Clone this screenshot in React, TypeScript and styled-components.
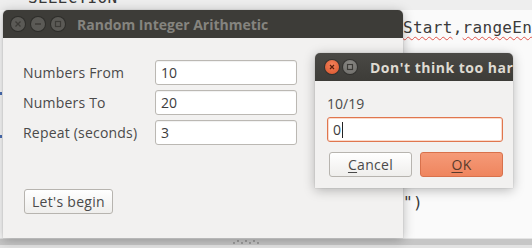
import React from "react";
import styled, { createGlobalStyle } from "styled-components";

const Global = createGlobalStyle`
  html, body { margin: 0; padding: 0; }
  body { width: 532px; height: 248px; overflow: hidden; background: #f6f6f6; }
  * { box-sizing: border-box; }
`;

const Desktop = styled.div`
  position: relative;
  width: 532px;
  height: 248px;
  overflow: hidden;
  background: linear-gradient(#eeeeee 0, #eeeeee 10px, #fafafa 10px);
  font-family: "Open Sans", "Noto Sans", sans-serif;
`;

const CodeText = styled.div<{ $x: number; $y: number }>`
  position: absolute;
  left: ${(p) => p.$x}px;
  top: ${(p) => p.$y}px;
  font-family: "DejaVu Sans Mono", "Liberation Mono", monospace;
  font-size: 16px;
  letter-spacing: 0.3px;
  color: #3a3a3a;
  white-space: nowrap;
`;

const Squiggle = styled.span`
  text-decoration: underline wavy #e0534a;
  text-decoration-thickness: 1px;
  text-underline-offset: 3px;
`;

const Gutter = styled.div`
  position: absolute;
  left: 0;
  top: 40px;
  width: 3px;
  height: 198px;
  display: flex;
  flex-direction: column;
  gap: 40px;
  padding-top: 52px;
`;

const GutterMark = styled.span`
  width: 2px;
  height: 3px;
  background: #4a6fb5;
`;

const StatusBar = styled.div`
  position: absolute;
  left: 0;
  top: 238px;
  width: 532px;
  height: 10px;
  background: linear-gradient(#e4e4e4 0, #e4e4e4 1px, #c6c6c6 1px, #c6c6c6 7px, #e2e2e2 7px);
  display: flex;
  justify-content: flex-start;
  padding-left: 232px;
  padding-top: 1px;
`;

const Window = styled.div<{ $x: number; $y: number; $w: number; $h: number }>`
  position: absolute;
  left: ${(p) => p.$x}px;
  top: ${(p) => p.$y}px;
  width: ${(p) => p.$w}px;
  height: ${(p) => p.$h}px;
  display: flex;
  flex-direction: column;
  border-radius: 5px 5px 0 0;
  background: #f2f1f0;
  box-shadow: 0 2px 12px rgba(0, 0, 0, 0.28), 0 0 1px rgba(0, 0, 0, 0.4);
`;

const TitleBar = styled.div<{ $focused?: boolean }>`
  height: 28px;
  flex: none;
  display: flex;
  align-items: center;
  padding-left: ${(p) => (p.$focused ? 10 : 8)}px;
  gap: ${(p) => (p.$focused ? 4 : 6)}px;
  border-radius: 5px 5px 0 0;
  background: ${(p) => (p.$focused ? "linear-gradient(#4a4945, #3d3c38)" : "#3d3c38")};
  overflow: hidden;
  white-space: nowrap;
`;

const Title = styled.span<{ $focused?: boolean }>`
  font-family: "Open Sans", "Noto Sans", sans-serif;
  font-weight: 700;
  font-size: 14px;
  color: ${(p) => (p.$focused ? "#dfdbd2" : "#85847f")};
  margin-left: ${(p) => (p.$focused ? 9 : 6)}px;
  letter-spacing: ${(p) => (p.$focused ? 0.5 : 0)}px;
`;

const CircleBtn = styled.span<{ $kind: "close" | "plain" | "dim" }>`
  width: 14px;
  height: 14px;
  border-radius: 50%;
  flex: none;
  display: flex;
  align-items: center;
  justify-content: center;
  background: ${(p) =>
    p.$kind === "close"
      ? "radial-gradient(circle at 50% 35%, #f3825b, #d9542b)"
      : p.$kind === "plain"
      ? "radial-gradient(circle at 50% 35%, #8d8c88, #6a6965)"
      : "#5b5a56"};
  box-shadow: 0 0 0 1px rgba(0, 0, 0, 0.25);
`;

const Body = styled.div<{ $pad: string }>`
  flex: 1;
  display: flex;
  flex-direction: column;
  padding: ${(p) => p.$pad};
  color: #4a4a4a;
  font-size: 14px;
`;

const FormGrid = styled.div`
  display: grid;
  grid-template-columns: 132px 142px;
  row-gap: 5px;
  align-items: center;
`;

const Label = styled.span`
  font-size: 14px;
  letter-spacing: 0.2px;
  color: #4a4a4a;
`;

const Field = styled.div<{ $focused?: boolean }>`
  height: 25px;
  display: flex;
  align-items: center;
  padding-left: 5px;
  font-size: 14px;
  color: #3c3c3c;
  background: #ffffff;
  border: 1px solid ${(p) => (p.$focused ? "#e0764e" : "#bbb8b3")};
  border-radius: 3px;
  box-shadow: ${(p) =>
    p.$focused ? "inset 0 0 0 1px rgba(240,150,110,0.35)" : "inset 0 1px 1px rgba(0,0,0,0.06)"};
`;

const Caret = styled.span`
  width: 1px;
  height: 16px;
  background: #222;
  margin-left: 1px;
`;

const Button = styled.div<{ $primary?: boolean; $w: number }>`
  width: ${(p) => p.$w}px;
  height: 25px;
  display: flex;
  align-items: center;
  justify-content: center;
  font-size: 14px;
  letter-spacing: 0.3px;
  color: ${(p) => (p.$primary ? "#5a3a2c" : "#4a4a4a")};
  border-radius: 3px;
  border: 1px solid ${(p) => (p.$primary ? "#d8714c" : "#b7b4af")};
  background: ${(p) =>
    p.$primary ? "linear-gradient(#f59a78, #ef855e)" : "linear-gradient(#ffffff, #efeeec)"};
`;

const Mnemonic = styled.span`
  text-decoration: underline;
  text-underline-offset: 2px;
`;

const ButtonRow = styled.div`
  display: flex;
  gap: 8px;
  padding-left: 2px;
`;

const DialogLabel = styled.div`
  font-size: 14px;
  color: #4a4a4a;
  height: 20px;
  line-height: 20px;
  margin-bottom: 3px;
`;

const WinIcon = ({ kind }: { kind: "x" | "min" | "max" }) => (
  <svg width="8" height="8" viewBox="0 0 8 8">
    {kind === "x" && (
      <path d="M1.5 1.5 L6.5 6.5 M6.5 1.5 L1.5 6.5" stroke="#3c3b37" strokeWidth="1.3" />
    )}
    {kind === "min" && <path d="M1 4 H7" stroke="#3c3b37" strokeWidth="1.5" />}
    {kind === "max" && <rect x="1.5" y="1.5" width="5" height="5" fill="none" stroke="#3c3b37" strokeWidth="1.2" />}
  </svg>
);

const DialogIcon = ({ kind }: { kind: "x" | "max" }) => (
  <svg width="8" height="8" viewBox="0 0 8 8">
    {kind === "x" ? (
      <path d="M2 2 L6 6 M6 2 L2 6" stroke="#5a1f0c" strokeWidth="1.2" />
    ) : (
      <rect x="1.5" y="1.5" width="5" height="5" fill="none" stroke="#3c3b37" strokeWidth="1.2" />
    )}
  </svg>
);

const Grip = () => (
  <svg width="30" height="6" viewBox="0 0 30 6">
    {[0, 1, 2, 3, 4, 5, 6].map((i) => (
      <circle key={i} cx={2 + i * 4} cy={i % 2 ? 2 : 4} r="0.9" fill="#8a8a8a" />
    ))}
  </svg>
);

export default function App() {
  return (
    <>
      <Global />
      <Desktop>
        <CodeText $x={28} $y={-12}>SELECTION</CodeText>
        <CodeText $x={403} $y={18}>
          <Squiggle>Start</Squiggle>,<Squiggle>rangeEnd</Squiggle>
        </CodeText>
        <CodeText $x={403} $y={193}>")</CodeText>
        <Gutter>
          <GutterMark />
          <GutterMark />
        </Gutter>
        <StatusBar>
          <Grip />
        </StatusBar>

        <Window $x={3} $y={10} $w={400} $h={228}>
          <TitleBar>
            <CircleBtn $kind="dim">
              <WinIcon kind="x" />
            </CircleBtn>
            <CircleBtn $kind="dim">
              <WinIcon kind="min" />
            </CircleBtn>
            <CircleBtn $kind="dim">
              <WinIcon kind="max" />
            </CircleBtn>
            <Title>Random Integer Arithmetic</Title>
          </TitleBar>
          <Body $pad="22px 0 0 20px">
            <FormGrid>
              <Label>Numbers From</Label>
              <Field>10</Field>
              <Label>Numbers To</Label>
              <Field>20</Field>
              <Label>Repeat (seconds)</Label>
              <Field>3</Field>
            </FormGrid>
            <Button $w={89} style={{ marginTop: 44, marginLeft: 1 }}>
              Let's begin
            </Button>
          </Body>
        </Window>

        <Window $x={315} $y={53} $w={198} $h={135}>
          <TitleBar $focused>
            <CircleBtn $kind="close">
              <DialogIcon kind="x" />
            </CircleBtn>
            <CircleBtn $kind="plain">
              <DialogIcon kind="max" />
            </CircleBtn>
            <Title $focused>Don't think too hard</Title>
          </TitleBar>
          <Body $pad="13px 10px 0 12px">
            <DialogLabel>10/19</DialogLabel>
            <Field $focused>
              0<Caret />
            </Field>
            <ButtonRow style={{ marginTop: 10 }}>
              <Button $w={83}>
                <Mnemonic>C</Mnemonic>ancel
              </Button>
              <Button $w={83} $primary>
                <Mnemonic>O</Mnemonic>K
              </Button>
            </ButtonRow>
          </Body>
        </Window>
      </Desktop>
    </>
  );
}
